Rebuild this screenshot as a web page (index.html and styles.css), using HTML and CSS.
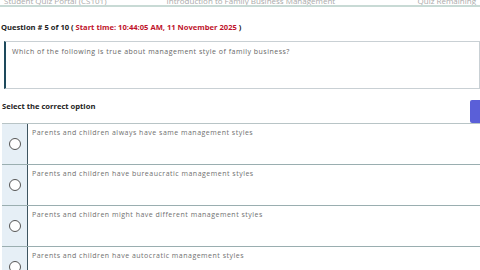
FILE: index.html
```html
<!DOCTYPE html>
<html lang="en">
<head>
  <meta charset="UTF-8">
  <meta name="viewport" content="width=device-width, initial-scale=1.0">
  <title>Quiz</title>
  <link rel="stylesheet" href="styles.css">
</head>
<body>
  <div class="topbar">
    <span class="top-left">Student Quiz Portal (CS101)</span>
    <span class="top-mid">Introduction to Family Business Management</span>
    <span class="top-right">Quiz Remaining</span>
  </div>

  <div class="heading">
    Question # 5 of 10 ( <span class="start">Start time: 10:44:05 AM, 11 November 2025</span> )
  </div>

  <div class="question">
    Which of the following is true about management style of family business?
  </div>

  <div class="select-row">
    <span class="select-label">Select the correct option</span>
    <button class="save" type="button">Save</button>
  </div>

  <div class="options">
    <div class="option">
      <div class="radio-cell"><span class="radio"></span></div>
      <div class="option-text">Parents and children always have same management styles</div>
    </div>
    <div class="option">
      <div class="radio-cell"><span class="radio"></span></div>
      <div class="option-text">Parents and children have bureaucratic management styles</div>
    </div>
    <div class="option">
      <div class="radio-cell"><span class="radio"></span></div>
      <div class="option-text">Parents and children might have different management styles</div>
    </div>
    <div class="option">
      <div class="radio-cell"><span class="radio"></span></div>
      <div class="option-text">Parents and children have autocratic management styles</div>
    </div>
  </div>
</body>
</html>
```

FILE: styles.css
```css
body {
  margin: 0;
  padding: 0;
  background: #fff;
  color: #333;
  font-family: "Open Sans", "Liberation Sans", sans-serif;
  overflow: hidden;
}
.topbar {
  height: 5px;
  display: flex;
  align-items: flex-end;
  gap: 60px;
  overflow: hidden;
  border-bottom: 2px solid #c8dad5;
  font-size: 8px;
  line-height: 8px;
  color: #aaa;
  padding: 0 4px;
}
.top-right {
  margin-left: auto;
}
.heading {
  margin: 15px 0 0 1px;
  font-size: 7.6px;
  font-weight: 700;
  color: #222;
}
.start {
  color: #c0142c;
}
.question {
  margin: 9px 0 0 4px;
  height: 36px;
  padding: 5px 6px;
  border: 1px solid #c9d0d4;
  border-left: 2px solid #1e4a5c;
  font-size: 7px;
  letter-spacing: 0.5px;
  color: #666;
}
.select-row {
  display: flex;
  align-items: flex-start;
  justify-content: space-between;
  margin: 11px 0 0 2px;
  height: 23px;
}
.select-label {
  padding-top: 1px;
  font-size: 7.6px;
  font-weight: 700;
  color: #222;
}
.save {
  width: 10px;
  height: 23px;
  border: none;
  border-radius: 2px 0 0 2px;
  background: #5a5fd8;
  color: transparent;
  padding: 0;
}
.options {
  margin-left: 2px;
  border-top: 1px solid #b8c4c6;
}
.option {
  display: flex;
  height: 40px;
  border-bottom: 1px solid #9aaeb0;
}
.radio-cell {
  width: 25px;
  background: #e6eff6;
  border-right: 1px solid #3d5460;
  display: flex;
  justify-content: center;
  align-items: center;
}
.radio {
  width: 10px;
  height: 10px;
  border: 1.2px solid #555;
  border-radius: 50%;
  background: #fff;
}
.option-text {
  padding: 4px 4px;
  font-size: 7px;
  letter-spacing: 0.5px;
  color: #707070;
}
```
